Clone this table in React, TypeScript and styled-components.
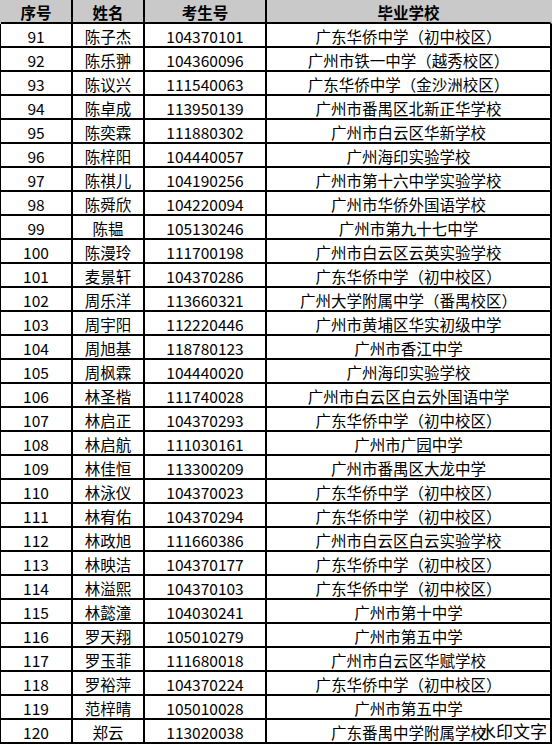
import React from "react";
import styled, { createGlobalStyle } from "styled-components";

const Global = createGlobalStyle`
  html, body { margin: 0; padding: 0; background: #fff; }
  body { font-family: "Noto Sans CJK SC", "Noto Sans", sans-serif; color: #000; }
`;

const Page = styled.div`
  position: relative;
  width: 553px;
  height: 746px;
  overflow: hidden;
  background: #fff;
`;

const Table = styled.div`
  display: flex;
  flex-direction: column;
  width: 552px;
`;

const Row = styled.div<{ $header?: boolean }>`
  display: grid;
  grid-template-columns: 72px 72px 122px 285px;
  height: 24px;
  box-sizing: border-box;
  border-left: 1px solid ${(p) => (p.$header ? "#c9c9c9" : "#000")};
  background: ${(p) => (p.$header ? "#c9c9c9" : "#fff")};
`;

const Cell = styled.div<{ $header?: boolean; $last?: boolean }>`
  box-sizing: border-box;
  border-bottom: 2px solid #000;
  border-right: 2px solid ${(p) => (p.$last && p.$header ? "#c9c9c9" : "#000")};
  display: flex;
  align-items: center;
  justify-content: center;
  font-size: 15.5px;
  line-height: 22px;
  padding-top: 1px;
  font-weight: ${(p) => (p.$header ? 700 : 400)};
  white-space: nowrap;
  overflow: hidden;
`;

const Watermark = styled.div`
  position: absolute;
  left: 479px;
  top: 720px;
  font-family: "Noto Sans CJK SC", sans-serif;
  font-size: 17px;
  line-height: 22px;
  color: #000;
  white-space: nowrap;
`;

const rows: [string, string, string, string][] = [
  ["91", "陈子杰", "104370101", "广东华侨中学（初中校区）"],
  ["92", "陈乐翀", "104360096", "广州市铁一中学（越秀校区）"],
  ["93", "陈议兴", "111540063", "广东华侨中学（金沙洲校区）"],
  ["94", "陈卓成", "113950139", "广州市番禺区北新正华学校"],
  ["95", "陈奕霖", "111880302", "广州市白云区华新学校"],
  ["96", "陈梓阳", "104440057", "广州海印实验学校"],
  ["97", "陈祺儿", "104190256", "广州市第十六中学实验学校"],
  ["98", "陈舜欣", "104220094", "广州市华侨外国语学校"],
  ["99", "陈韫", "105130246", "广州市第九十七中学"],
  ["100", "陈漫玲", "111700198", "广州市白云区云英实验学校"],
  ["101", "麦景轩", "104370286", "广东华侨中学（初中校区）"],
  ["102", "周乐洋", "113660321", "广州大学附属中学（番禺校区）"],
  ["103", "周宇阳", "112220446", "广州市黄埔区华实初级中学"],
  ["104", "周旭基", "118780123", "广州市香江中学"],
  ["105", "周枫霖", "104440020", "广州海印实验学校"],
  ["106", "林圣楷", "111740028", "广州市白云区白云外国语中学"],
  ["107", "林启正", "104370293", "广东华侨中学（初中校区）"],
  ["108", "林启航", "111030161", "广州市广园中学"],
  ["109", "林佳恒", "113300209", "广州市番禺区大龙中学"],
  ["110", "林泳仪", "104370023", "广东华侨中学（初中校区）"],
  ["111", "林宥佑", "104370294", "广东华侨中学（初中校区）"],
  ["112", "林政旭", "111660386", "广州市白云区白云实验学校"],
  ["113", "林映洁", "104370177", "广东华侨中学（初中校区）"],
  ["114", "林溢熙", "104370103", "广东华侨中学（初中校区）"],
  ["115", "林懿潼", "104030241", "广州市第十中学"],
  ["116", "罗天翔", "105010279", "广州市第五中学"],
  ["117", "罗玉菲", "111680018", "广州市白云区华赋学校"],
  ["118", "罗裕萍", "104370224", "广东华侨中学（初中校区）"],
  ["119", "范梓晴", "105010028", "广州市第五中学"],
  ["120", "郑云", "113020038", "广东番禺中学附属学校"],
];

const headers = ["序号", "姓名", "考生号", "毕业学校"];

export default function App() {
  return (
    <Page>
      <Global />
      <Table>
        <Row $header>
          {headers.map((h, i) => (
            <Cell key={h} $header $last={i === 3}>
              {h}
            </Cell>
          ))}
        </Row>
        {rows.map((r) => (
          <Row key={r[0]}>
            {r.map((c, i) => (
              <Cell key={i} $last={i === 3}>
                {c}
              </Cell>
            ))}
          </Row>
        ))}
      </Table>
      <Watermark>水印文字</Watermark>
    </Page>
  );
}
